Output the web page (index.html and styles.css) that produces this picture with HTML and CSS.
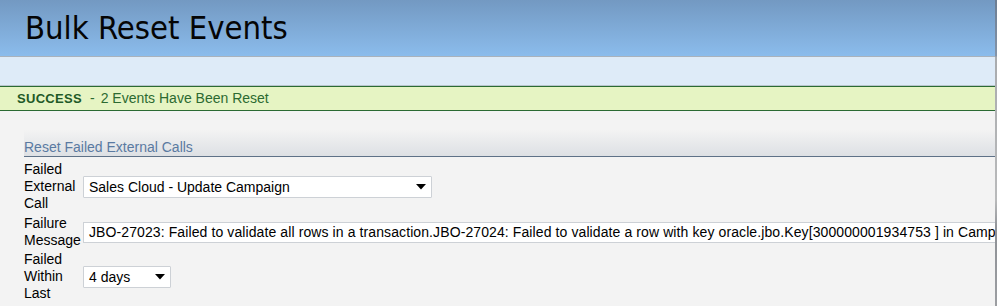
FILE: index.html
```html
<!DOCTYPE html>
<html>
<head>
<meta charset="utf-8">
<title>Bulk Reset Events</title>
<link rel="stylesheet" href="styles.css">
</head>
<body>
<div class="page">
  <div class="main">
    <div class="header"><h1 class="title">Bulk Reset Events</h1></div>
    <div class="band"></div>
    <div class="success"><span class="success-label">SUCCESS</span><span class="success-dash">-</span><span class="success-text">2 Events Have Been Reset</span></div>
    <div class="section">
      <div class="section-head">Reset Failed External Calls</div>
      <div class="form">
        <div class="row">
          <div class="label">Failed<br>External<br>Call</div>
          <div class="select select-wide">
            <span class="select-text">Sales Cloud - Update Campaign</span>
            <svg class="arrow" width="10" height="6" viewBox="0 0 10 6"><polygon points="0,0 10,0 5,5.5" fill="#000"/></svg>
          </div>
        </div>
        <div class="row row-second">
          <div class="label">Failure<br>Message</div>
          <div class="textfield">JBO-27023: Failed to validate all rows in a transaction.JBO-27024: Failed to validate a row with key oracle.jbo.Key[300000001934753 ] in Campaign</div>
        </div>
        <div class="row">
          <div class="label">Failed<br>Within<br>Last</div>
          <div class="select select-small">
            <span class="select-text">4 days</span>
            <svg class="arrow" width="10" height="6" viewBox="0 0 10 6"><polygon points="0,0 10,0 5,5.5" fill="#000"/></svg>
          </div>
        </div>
      </div>
    </div>
  </div>
  <div class="edge"></div>
</div>
</body>
</html>
```

FILE: styles.css
```css
html, body {
  margin: 0;
  padding: 0;
}
body {
  background: #f3f3f3;
  font-family: "Liberation Sans", Arial, sans-serif;
  font-size: 14px;
  color: #000;
  overflow: hidden;
}
.page {
  display: flex;
  width: 997px;
  height: 306px;
}
.main {
  width: 995px;
  overflow: hidden;
}
.edge {
  width: 2px;
  background: linear-gradient(to bottom, #6c7d92 0, #8494a8 56px, #a9abae 57px, #b9babb 200px, #8e9196 230px, #9c9ea2 306px);
}
.header {
  height: 56px;
  border-bottom: 1px solid #a9b2bc;
  background: linear-gradient(to bottom, #7399c2 0%, #8bbcec 100%);
  padding-left: 25px;
}
.title {
  margin: 0;
  font-family: "DejaVu Sans Condensed", "DejaVu Sans", sans-serif;
  font-weight: normal;
  font-size: 32.5px;
  line-height: 56px;
  color: #050505;
}
.band {
  height: 28px;
  background: #deebf8;
  border-bottom: 1px solid #b8c4cc;
}
.success {
  height: 23px;
  line-height: 23px;
  background: #e6f4c3;
  border-top: 1px solid #2b6a33;
  border-bottom: 1px solid #2b6a33;
  padding-left: 17px;
  white-space: nowrap;
}
.success-label {
  font-weight: bold;
  font-size: 13px;
  letter-spacing: 0.3px;
  color: #1f5a27;
}
.success-dash {
  color: #2c6a31;
  margin: 0 6px 0 8px;
}
.success-text {
  color: #2c6a31;
  font-size: 14px;
}
.section {
  margin-top: 19px;
  margin-left: 24px;
}
.section-head {
  height: 18px;
  padding-top: 8px;
  line-height: 18px;
  color: #5a7aa1;
  font-size: 14px;
  background: linear-gradient(to bottom, #f3f3f3 0%, #dde0e4 100%);
  border-bottom: 1px solid #5e7187;
}
.form {
  display: flex;
  flex-direction: column;
  gap: 2px;
  padding-top: 4px;
}
.row {
  display: flex;
  align-items: center;
}
.row-second {
  margin-top: 1px;
}
.label {
  width: 59px;
  flex: none;
  line-height: 17px;
  font-size: 14px;
}
.select {
  flex: none;
  display: flex;
  align-items: center;
  justify-content: space-between;
  box-sizing: border-box;
  height: 22px;
  background: #fff;
  border: 1px solid #cdd1d6;
  border-radius: 1px;
  padding: 0 5px 0 5px;
  white-space: nowrap;
}
.select-wide {
  width: 349px;
}
.select-small {
  width: 88px;
}
.arrow {
  display: block;
  flex: none;
}
.textfield {
  flex: none;
  box-sizing: border-box;
  width: 1000px;
  height: 21px;
  line-height: 19px;
  background: #fff;
  border: 1px solid #cdd1d6;
  padding-left: 5px;
  letter-spacing: 0.1px;
  white-space: nowrap;
  overflow: hidden;
}
```
